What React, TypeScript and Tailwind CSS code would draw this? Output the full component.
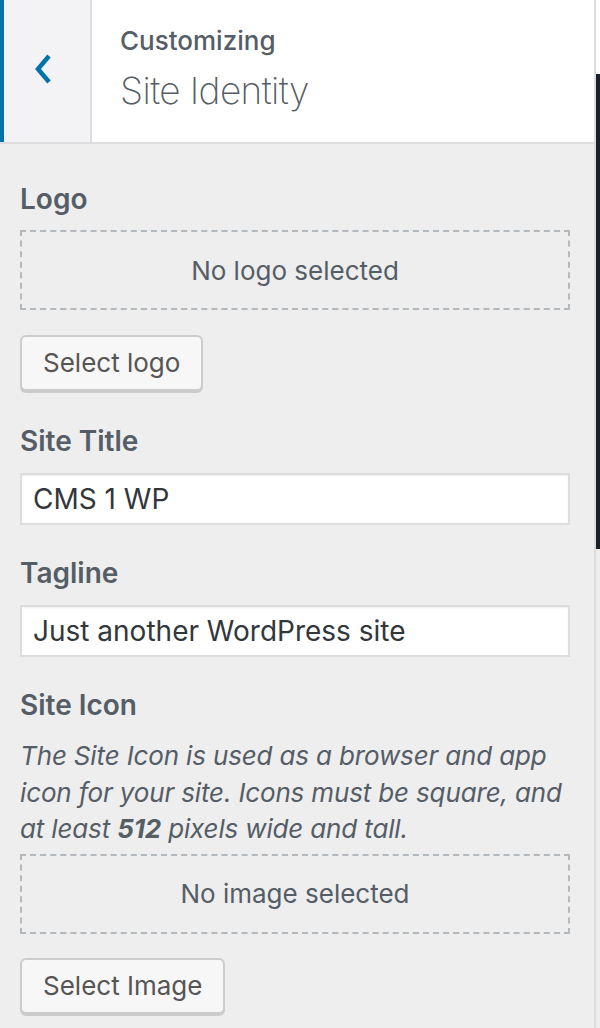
import React from "react";

const font = { fontFamily: "Inter, 'Noto Sans', 'Liberation Sans', sans-serif" };

function DashedBox({ text }: { text: string }) {
  return (
    <div className="w-[550px] h-[80px] border-2 border-dashed border-[#b4b9be] flex items-center justify-center text-[26px] text-[#555d66]">
      {text}
    </div>
  );
}

function Button({ label }: { label: string }) {
  return (
    <button className="h-[56px] px-[21px] bg-[#f7f7f7] border-2 border-[#cccccc] rounded-[6px] shadow-[0_2px_0_#cccccc] text-[26px] text-[#555555] leading-none">
      {label}
    </button>
  );
}

function TextInput({ value }: { value: string }) {
  return (
    <div className="w-[550px] h-[52px] bg-white border-2 border-[#dddddd] shadow-[inset_0_1px_2px_rgba(0,0,0,0.07)] flex items-center pl-[11px] text-[28px] text-[#32373c]">
      {value}
    </div>
  );
}

function Label({ children, className = "" }: { children: React.ReactNode; className?: string }) {
  return <div className={`text-[28px] leading-[36px] font-semibold text-[#555d66] ${className}`}>{children}</div>;
}

export default function App() {
  return (
    <div className="w-[600px] h-[1028px] flex bg-[#eeeeee] overflow-hidden" style={font}>
      <div className="w-[596px] border-r-2 border-[#dddddd] flex flex-col">
        {/* Header */}
        <div className="h-[144px] flex bg-white border-b-2 border-[#dddddd]">
          <div className="w-[92px] h-full bg-[#f3f3f5] border-l-4 border-[#0073aa] border-r-2 border-r-[#dddddd] flex items-center justify-center">
            <svg width="24" height="34" viewBox="0 0 24 34" className="mr-[6px] mb-[4px]">
              <polyline points="17,4 6,17 17,30" fill="none" stroke="#0073aa" strokeWidth="4.5" />
            </svg>
          </div>
          <div className="pl-[28px] pt-[24px] text-[#555d66]">
            <div className="text-[26px] leading-[34px] font-medium">Customizing</div>
            <div className="text-[37px] leading-[52px] font-extralight tracking-[-0.6px] mt-[7px]">Site Identity</div>
          </div>
        </div>

        {/* Body */}
        <div className="px-[20px] flex flex-col items-start">
          <Label className="mt-[37px]">Logo</Label>
          <div className="mt-[13px]">
            <DashedBox text="No logo selected" />
          </div>
          <div className="mt-[25px]">
            <Button label="Select logo" />
          </div>

          <Label className="mt-[32px]">Site Title</Label>
          <div className="mt-[14px]">
            <TextInput value="CMS 1 WP" />
          </div>

          <Label className="mt-[30px]">Tagline</Label>
          <div className="mt-[14px]">
            <TextInput value="Just another WordPress site" />
          </div>

          <Label className="mt-[30px]">Site Icon</Label>
          <p className="mt-[15px] w-[560px] text-[26px] leading-[36.5px] italic text-[#555d66] tracking-[-0.15px]">
            The Site Icon is used as a browser and app icon for your site. Icons must be square, and at least <strong>512</strong> pixels wide and tall.
          </p>
          <div className="mt-[6px]">
            <DashedBox text="No image selected" />
          </div>
          <div className="mt-[24px]">
            <Button label="Select Image" />
          </div>
        </div>
      </div>
      <div className="w-[4px] flex flex-col bg-white">
        <div className="h-[74px]" />
        <div className="h-[475px] bg-[#17222b]" />
        <div className="flex-1 bg-[#eeeeee]" />
      </div>
    </div>
  );
}
